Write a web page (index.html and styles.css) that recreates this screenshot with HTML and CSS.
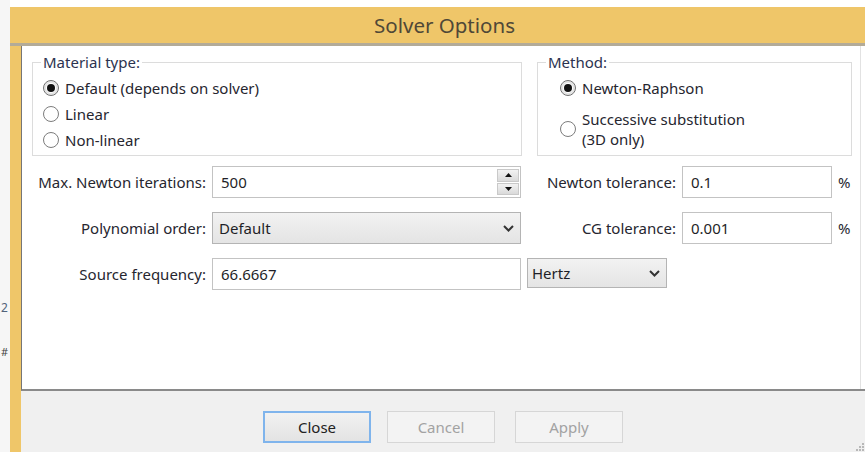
FILE: index.html
```html
<!DOCTYPE html>
<html lang="en">
<head>
<meta charset="utf-8">
<title>Solver Options</title>
<link rel="stylesheet" href="styles.css">
</head>
<body>
<div class="screen">
  <div class="backdrop">
    <span class="peek peek-a">2</span>
    <span class="peek peek-b">#</span>
  </div>
  <div class="window">
    <div class="titlebar">Solver Options</div>
    <div class="frame">
      <div class="client">
        <div class="panel">
          <div class="groups">
            <fieldset class="group group-material">
              <legend>Material type:</legend>
              <label class="radio"><span class="dot on"></span>Default (depends on solver)</label>
              <label class="radio"><span class="dot"></span>Linear</label>
              <label class="radio"><span class="dot"></span>Non-linear</label>
            </fieldset>
            <fieldset class="group group-method">
              <legend>Method:</legend>
              <label class="radio"><span class="dot on"></span>Newton-Raphson</label>
              <label class="radio two-line"><span class="dot"></span><span>Successive substitution<br>(3D only)</span></label>
            </fieldset>
          </div>

          <div class="form">
            <span class="lbl">Max. Newton iterations:</span>
            <div class="field spin">
              <span class="val">500</span>
              <span class="spinner">
                <span class="sbtn"><svg width="7" height="4" viewBox="0 0 7 4"><path d="M0 4 L3.5 0 L7 4 Z" fill="#111"/></svg></span>
                <span class="sbtn"><svg width="7" height="4" viewBox="0 0 7 4"><path d="M0 0 L3.5 4 L7 0 Z" fill="#111"/></svg></span>
              </span>
            </div>
            <span class="lbl">Newton tolerance:</span>
            <div class="field"><span class="val">0.1</span></div>
            <span class="unit">%</span>

            <span class="lbl">Polynomial order:</span>
            <div class="combo">
              <span class="val">Default</span>
              <svg class="chev" width="11" height="7" viewBox="0 0 11 7"><path d="M1 1 L5.5 5.5 L10 1" fill="none" stroke="#333" stroke-width="2"/></svg>
            </div>
            <span class="lbl">CG tolerance:</span>
            <div class="field"><span class="val">0.001</span></div>
            <span class="unit">%</span>

            <span class="lbl">Source frequency:</span>
            <div class="field"><span class="val">66.6667</span></div>
            <div class="combo combo-unit">
              <span class="val">Hertz</span>
              <svg class="chev" width="11" height="7" viewBox="0 0 11 7"><path d="M1 1 L5.5 5.5 L10 1" fill="none" stroke="#333" stroke-width="2"/></svg>
            </div>
          </div>
        </div>
        <div class="buttons">
          <button class="btn btn-default">Close</button>
          <button class="btn" disabled>Cancel</button>
          <button class="btn btn-last" disabled>Apply</button>
          <svg class="grip" width="8" height="8" viewBox="0 0 8 8">
            <rect x="6" y="0" width="2" height="2" fill="#b8b8b8"/>
            <rect x="6" y="3" width="2" height="2" fill="#b8b8b8"/>
            <rect x="3" y="3" width="2" height="2" fill="#b8b8b8"/>
            <rect x="6" y="6" width="2" height="2" fill="#b8b8b8"/>
            <rect x="3" y="6" width="2" height="2" fill="#b8b8b8"/>
            <rect x="0" y="6" width="2" height="2" fill="#b8b8b8"/>
          </svg>
        </div>
      </div>
    </div>
  </div>
</div>
</body>
</html>
```

FILE: styles.css
```css
* { box-sizing: border-box; }

html, body {
  margin: 0;
  padding: 0;
  background: #ffffff;
}

body {
  font-family: "Noto Sans", "Open Sans", sans-serif;
  font-size: 15px;
  color: #26262f;
}

.screen {
  display: flex;
  width: 865px;
  height: 452px;
  overflow: hidden;
}

/* sliver of the window lying underneath */
.backdrop {
  width: 10px;
  flex: none;
  background: #f6f6f6;
  display: flex;
  flex-direction: column;
  align-items: flex-start;
  padding-top: 300px;
}

.peek {
  font-size: 12px;
  line-height: 16px;
  color: #52627a;
  margin-left: 1px;
}

.peek-b {
  margin-top: 28px;
  font-size: 11px;
  color: #444;
}

/* dialog window */
.window {
  flex: 1;
  margin-top: 7px;
  display: flex;
  flex-direction: column;
  background: #efc669;
}

.titlebar {
  height: 39px;
  flex: none;
  display: flex;
  align-items: center;
  justify-content: center;
  font-size: 20.5px;
  color: #4f4837;
  padding-left: 14px;
  padding-bottom: 1px;
  border-bottom: 3px solid #b3ab98;
}

.frame {
  flex: 1;
  display: flex;
  padding-left: 11px;
}

.client {
  flex: 1;
  display: flex;
  flex-direction: column;
  background: #f0f0f0;
}

.panel {
  height: 345px;
  flex: none;
  background: #ffffff;
  border-left: 1px solid #767676;
  border-bottom: 2px solid #8a8a8a;
  box-shadow: inset -4px 0 0 #ffffff, inset -5px 0 0 #e2e2e2;
  padding: 6px 0 0 10px;
}

/* option groups */
.groups {
  display: flex;
  gap: 15px;
}

.group {
  margin: 0;
  height: 104px;
  border: 1px solid #dcdcdc;
  padding: 0 0 0 10px;
  display: flex;
  flex-direction: column;
}

.group legend {
  padding: 0 2px;
  margin-left: -2px;
  color: #2c3350;
  line-height: 20px;
}

.group-material { width: 490px; }
.group-method { width: 315px; }

.radio {
  display: flex;
  align-items: center;
  height: 26px;
  color: #26262f;
}

.group .radio:first-of-type { margin-top: 3px; }
.group-method .radio { margin-left: 12px; }

.two-line {
  height: 40px;
  margin-top: 8px;
  line-height: 20px;
}

.dot {
  width: 16px;
  height: 16px;
  border: 1px solid #7c7c7c;
  border-radius: 50%;
  background: #fff;
  margin-right: 6px;
  flex: none;
  position: relative;
}

.dot.on {
  border-color: #707070;
  box-shadow: inset 0 0 0 2px #e4e4e4;
}

.dot.on::after {
  content: "";
  position: absolute;
  left: 3px;
  top: 3px;
  width: 8px;
  height: 8px;
  border-radius: 50%;
  background: #111;
}

/* parameter rows */
.form {
  display: grid;
  grid-template-columns: 174px 309px 149px 150px auto;
  grid-auto-rows: 32px;
  column-gap: 6px;
  row-gap: 14px;
  align-items: center;
  margin-top: 10px;
}

.lbl {
  text-align: right;
  white-space: nowrap;
  color: #26262f;
}

.field {
  height: 32px;
  border: 1px solid #c3c3c3;
  background: #fff;
  display: flex;
  align-items: center;
  padding-left: 8px;
}

.val { color: #1f1f28; }

.spin { padding-right: 1px; }

.spin .val { flex: 1; }

.spinner {
  display: flex;
  flex-direction: column;
  gap: 1px;
  width: 22px;
  align-self: stretch;
  padding: 2px 0;
}

.sbtn {
  flex: 1;
  display: flex;
  align-items: center;
  justify-content: center;
  background: linear-gradient(#f2f2f2, #dadada);
  border: 1px solid #c9c9c9;
}

.unit {
  color: #26262f;
  padding-left: 0;
}

.combo {
  height: 32px;
  border: 1px solid #b4b4b4;
  background: linear-gradient(#f2f2f2, #e4e4e4);
  display: flex;
  align-items: center;
  justify-content: space-between;
  padding: 0 6px 0 6px;
}

.combo-unit {
  width: 140px;
  height: 30px;
  justify-self: start;
  align-self: start;
  padding-left: 4px;
  padding-right: 6px;
}

.chev { flex: none; }

/* dialog buttons */
.buttons {
  flex: 1;
  display: flex;
  justify-content: center;
  align-items: flex-start;
  gap: 16px;
  padding-top: 20px;
  position: relative;
}

.btn {
  width: 108px;
  height: 32px;
  font-family: inherit;
  font-size: 15px;
  border: 1px solid #d6d6d6;
  background: #f3f3f3;
  color: #a2a2a2;
  padding: 0;
}

.btn-default {
  border: 2px solid #7fb4ec;
  background: linear-gradient(#f1f1f1, #e3e3e3);
  color: #222;
}

.btn-last { margin-left: 4px; }

.grip {
  position: absolute;
  right: 1px;
  bottom: 1px;
}
```
